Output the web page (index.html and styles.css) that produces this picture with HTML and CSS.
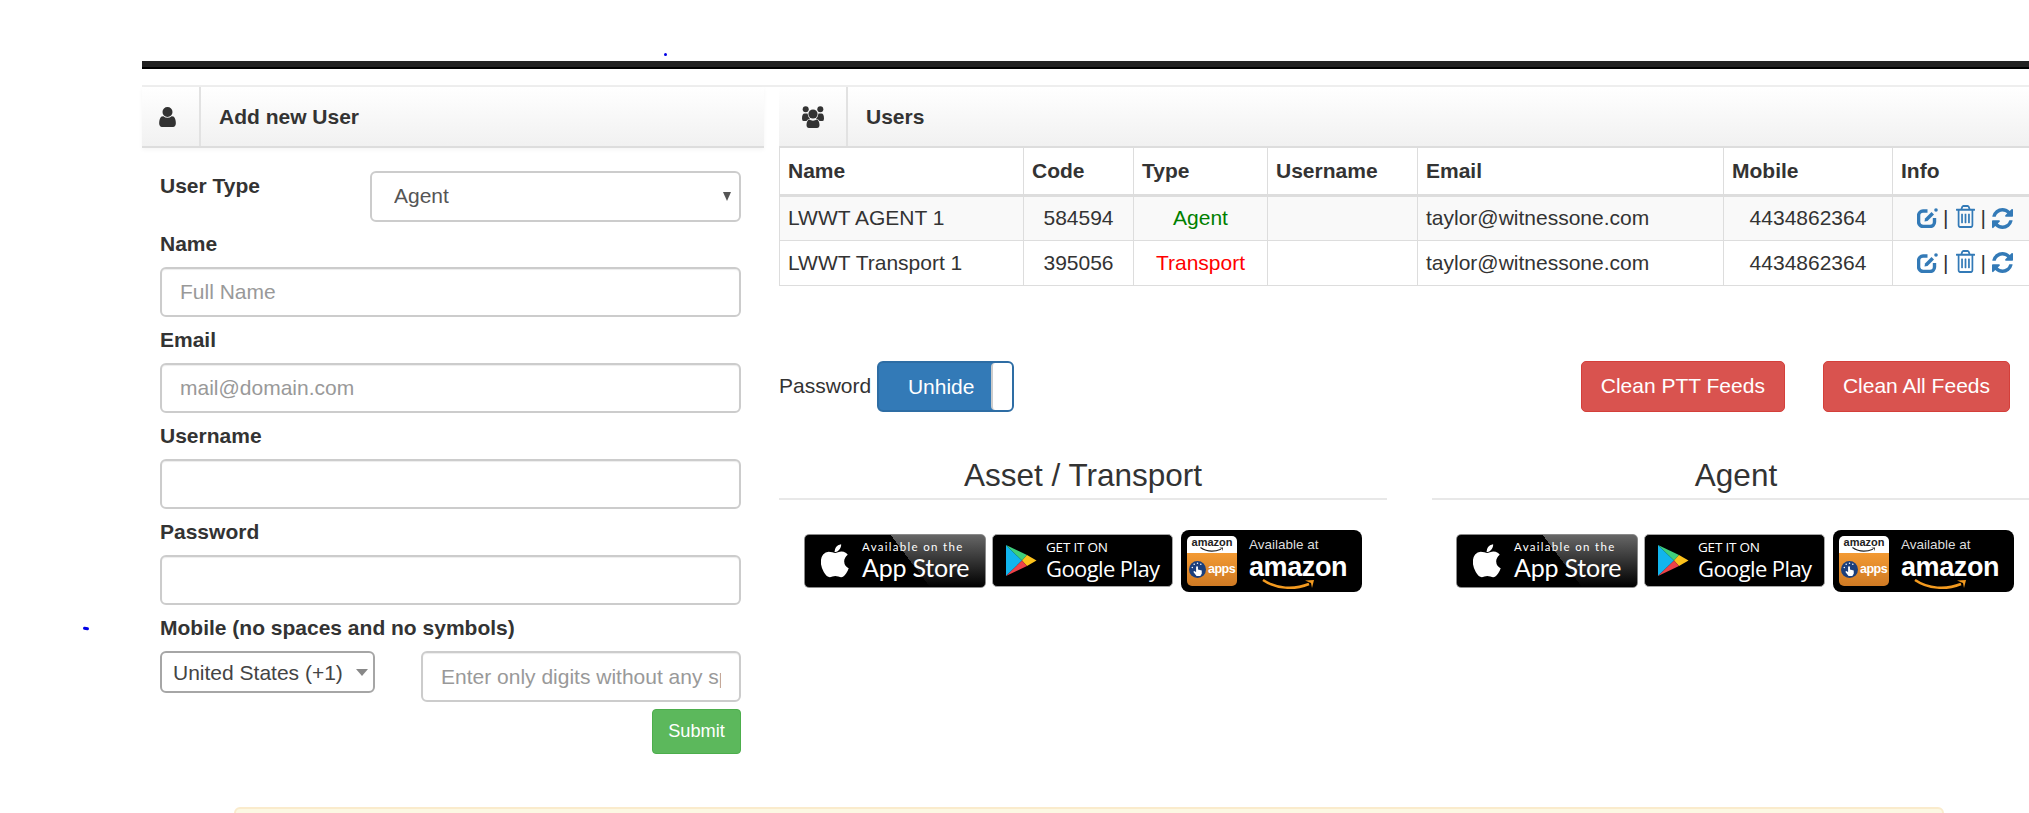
FILE: index.html
```html
<!DOCTYPE html>
<html>
<head>
  <title>Users</title>
  <link rel="stylesheet" href="styles.css">
</head>
<body>
  <svg class="defs" width="0" height="0">
    <symbol id="i-edit" viewBox="0 0 21 20">
      <path d="M10.500 3H6A4.500 4.500 0 0 0 1.600 7.500v7A4.500 4.500 0 0 0 6 18.500h7a4.500 4.500 0 0 0 4.500-4.500V10" fill="none" stroke="currentColor" stroke-width="3.400"/>
      <path d="M8 10.500 14.500 4 17 6.500 10.500 13 7.500 13.500Z" fill="currentColor"/>
      <circle cx="19" cy="2" r="1.800" fill="currentColor"/>
    </symbol>
    <symbol id="i-trash" viewBox="192 128 1408 1536" preserveAspectRatio="none">
      <path d="M704 736v576q0 14-9 23t-23 9h-64q-14 0-23-9t-9-23v-576q0-14 9-23t23-9h64q14 0 23 9t9 23zm256 0v576q0 14-9 23t-23 9h-64q-14 0-23-9t-9-23v-576q0-14 9-23t23-9h64q14 0 23 9t9 23zm256 0v576q0 14-9 23t-23 9h-64q-14 0-23-9t-9-23v-576q0-14 9-23t23-9h64q14 0 23 9t9 23zm128 724v-948h-896v948q0 22 7 40.5t14.5 27 10.5 8.5h832q3 0 10.5-8.5t14.5-27 7-40.5zm-672-1076h448l-48-117q-7-9-17-11h-317q-10 2-17 11zm928 32v64q0 14-9 23t-23 9h-96v948q0 83-47 143.5t-113 60.5h-832q-66 0-113-58.5t-47-141.5v-952h-96q-14 0-23-9t-9-23v-64q0-14 9-23t23-9h309l70-167q15-37 54-63t79-26h320q40 0 79 26t54 63l70 167h309q14 0 23 9t9 23z" fill="currentColor"/>
    </symbol>
    <symbol id="i-sync" viewBox="128 128 1536 1536">
      <path d="M1639 1056q0 5-1 7-64 268-268 434.5t-478 166.5q-146 0-282.500-55t-243.500-157l-129 129q-19 19-45 19t-45-19-19-45v-448q0-26 19-45t45-19h448q26 0 45 19t19 45-19 45l-137 137q71 66 161 102t187 36q134 0 250-65t186-179q11-17 53-117 8-23 30-23h192q13 0 22.500 9.500t9.500 22.500zm25-800v448q0 26-19 45t-45 19h-448q-26 0-45-19t-19-45 19-45l138-138q-148-137-349-137-134 0-250 65t-186 179q-11 17-53 117-8 23-30 23h-199q-13 0-22.500-9.500t-9.500-22.500v-7q65-268 270-434.500t480-166.500q146 0 284 55.500t245 156.500l130-129q19-19 45-19t45 19 19 45z" fill="currentColor"/>
    </symbol>
    <symbol id="i-apple" viewBox="200 30 1400 1640">
      <path d="M1585 1215q-39 125-123 250-129 196-257 196-49 0-140-32-86-32-151-32-61 0-142 33-81 34-132 34-152 0-301-259-147-261-147-503 0-228 113-374 113-144 284-144 72 0 177 30 104 30 138 30 45 0 143-34 102-34 173-34 119 0 213 65 52 36 104 100-79 67-114 118-65 94-65 207 0 124 69 223t158 126zm-376-1173q0 61-29 136-30 75-93 138-54 54-108 72-37 11-104 17 3-149 78-257 74-107 250-132 1 3 2.500 11t2.500 11q0 2 .5 5t.5 6z" fill="currentColor"/>
    </symbol>
    <symbol id="i-play" viewBox="0 0 32 33">
      <path d="M1 1 17 16.500 1 32Z" fill="#12b5ee"/>
      <path d="M1 1 22 11 17 16.500Z" fill="#3ecf7c"/>
      <path d="M22 11 31.500 16.500 22 22 17 16.500Z" fill="#fcc21b"/>
      <path d="M1 32 17 16.500 22 22Z" fill="#ee4249"/>
    </symbol>
    <symbol id="i-smile" viewBox="0 0 54 11">
      <path d="M1 1C14 10 32 11 47 5" fill="none" stroke="currentColor" stroke-width="2.500"/>
      <path d="M43 1.500 52 1 50 9 49 4Z" fill="currentColor"/>
    </symbol>
    <symbol id="i-hand" viewBox="0 0 18 18">
      <circle cx="9" cy="9" r="9" fill="#1c3f7c"/>
      <path d="M7.500 6.500a1 1 0 0 1 2 0V9l4 1v3.500L12 16H8L4.500 11.500 6 10.500l1.500 1.500Z" fill="#fff"/>
      <circle cx="3.500" cy="7" r=".8" fill="#fff"/>
      <circle cx="5.500" cy="3.500" r=".8" fill="#fff"/>
      <circle cx="9" cy="2.500" r=".8" fill="#fff"/>
      <circle cx="12.500" cy="3.500" r=".8" fill="#fff"/>
    </symbol>
  </svg>

  <span class="speck speck-top"></span>
  <span class="speck speck-left"></span>

  <div class="page">
    <div class="topbar"></div>

    <div class="cols">
      <section class="left">
        <div class="panel-head">
          <span class="panel-icon user-icon">
            <svg class="icon-user" viewBox="256 128 1280 1536"><path d="M1536 1399q0 109-62.500 187t-150.500 78h-854q-88 0-150.500-78t-62.500-187q0-85 8.500-160.500t31.500-152 58.500-131 94-89 134.500-34.500q131 128 313 128t313-128q76 0 134.500 34.500t94 89 58.500 131 31.500 152 8.500 160.500zm-256-887q0 159-112.500 271.500t-271.500 112.500-271.500-112.500-112.500-271.500 112.500-271.500 271.500-112.500 271.500 112.500 112.500 271.500z" fill="currentColor"/></svg>
          </span>
          <h2 class="panel-title">Add new User</h2>
        </div>

        <form class="user-form">
          <div class="type-row">
            <label for="user-type" class="form-label">User Type</label>
            <div class="select-box">
              <select id="user-type" class="form-select">
                <option>Agent</option>
                <option>Transport</option>
              </select>
            </div>
          </div>

          <label for="full-name" class="form-label field-label">Name</label>
          <input id="full-name" class="form-input" type="text" placeholder="Full Name">

          <label for="email" class="form-label field-label">Email</label>
          <input id="email" class="form-input" type="text" placeholder="mail@domain.com">

          <label for="username" class="form-label field-label">Username</label>
          <input id="username" class="form-input" type="text">

          <label for="password" class="form-label field-label">Password</label>
          <input id="password" class="form-input" type="password">

          <label for="mobile" class="form-label field-label">Mobile (no spaces and no symbols)</label>
          <div class="mobile-row">
            <div class="country-box">
              <select class="country-select">
                <option>United States (+1)</option>
              </select>
            </div>
            <input id="mobile" class="form-input mobile-input" type="text" placeholder="Enter only digits without any spaces">
          </div>

          <div class="submit-row">
            <button type="submit" class="btn-submit">Submit</button>
          </div>
        </form>
      </section>

      <section class="right">
        <div class="panel-head">
          <span class="panel-icon users-icon">
            <svg class="icon-users" viewBox="0 0 22 22">
              <circle cx="3.700" cy="3.300" r="3"/>
              <circle cx="18.300" cy="3.300" r="3"/>
              <path d="M0 12.500C0 9 1 7.500 2.500 7.500H5.500Q6 11 8 12.500 5 13.500 4.500 15H1.500Q0 15 0 12.500Z"/>
              <path d="M22 12.500C22 9 21 7.500 19.500 7.500H16.500Q16 11 14 12.500 17 13.500 17.500 15H20.500Q22 15 22 12.500Z"/>
              <circle cx="11" cy="8" r="4.600"/>
              <path d="M4.500 19C4.500 15.500 6 13.500 7.500 13.500 9 15 13 15 14.500 13.500 16 13.500 17.500 15.500 17.500 19 17.500 21 16.500 22 15 22H7C5.500 22 4.500 21 4.500 19Z"/>
            </svg>
          </span>
          <h2 class="panel-title">Users</h2>
        </div>

        <table class="users-table">
          <thead>
            <tr>
              <th class="col-name">Name</th>
              <th class="col-code">Code</th>
              <th class="col-type">Type</th>
              <th class="col-user">Username</th>
              <th class="col-email">Email</th>
              <th class="col-mobile">Mobile</th>
              <th class="col-info">Info</th>
            </tr>
          </thead>
          <tbody>
            <tr class="row-odd">
              <td>LWWT AGENT 1</td>
              <td class="center">584594</td>
              <td class="center type-agent">Agent</td>
              <td></td>
              <td>taylor@witnessone.com</td>
              <td class="center">4434862364</td>
              <td>
                <div class="actions">
                  <svg class="act act-edit"><use href="#i-edit"/></svg><span class="pipe">|</span>
                  <svg class="act act-trash"><use href="#i-trash"/></svg><span class="pipe">|</span>
                  <svg class="act act-sync"><use href="#i-sync"/></svg>
                </div>
              </td>
            </tr>
            <tr>
              <td>LWWT Transport 1</td>
              <td class="center">395056</td>
              <td class="center type-transport">Transport</td>
              <td></td>
              <td>taylor@witnessone.com</td>
              <td class="center">4434862364</td>
              <td>
                <div class="actions">
                  <svg class="act act-edit"><use href="#i-edit"/></svg><span class="pipe">|</span>
                  <svg class="act act-trash"><use href="#i-trash"/></svg><span class="pipe">|</span>
                  <svg class="act act-sync"><use href="#i-sync"/></svg>
                </div>
              </td>
            </tr>
          </tbody>
        </table>

        <div class="tools-row">
          <div class="password-toggle">
            <span>Password</span>
            <div class="toggle">
              <span class="toggle-on">Unhide</span>
              <span class="toggle-handle"></span>
            </div>
          </div>
          <div class="clean-btns">
            <button class="btn-danger">Clean PTT Feeds</button>
            <button class="btn-danger">Clean All Feeds</button>
          </div>
        </div>

        <div class="downloads">
          <div class="dl">
            <h3 class="dl-title">Asset / Transport</h3>
            <div class="badges">
              <div class="badge badge-apple">
                <svg class="badge-logo-apple"><use href="#i-apple"/></svg>
                <div class="badge-text">
                  <span class="apple-small">Available on the</span>
                  <span class="apple-big">App Store</span>
                </div>
              </div>
              <div class="badge badge-google">
                <svg class="badge-logo-play"><use href="#i-play"/></svg>
                <div class="badge-text">
                  <span class="google-small">GET IT ON</span>
                  <span class="google-big">Google Play</span>
                </div>
              </div>
              <div class="badge badge-amazon">
                <div class="amz-tile">
                  <div class="amz-tile-top">
                    <span>amazon</span>
                    <svg class="amz-tile-smile"><use href="#i-smile"/></svg>
                  </div>
                  <div class="amz-tile-bottom">
                    <svg class="amz-hand"><use href="#i-hand"/></svg>
                    <span>apps</span>
                  </div>
                </div>
                <div class="badge-text">
                  <span class="amz-small">Available at</span>
                  <span class="amz-big">amazon</span>
                  <svg class="amz-smile"><use href="#i-smile"/></svg>
                </div>
              </div>
            </div>
          </div>

          <div class="dl">
            <h3 class="dl-title">Agent</h3>
            <div class="badges">
              <div class="badge badge-apple">
                <svg class="badge-logo-apple"><use href="#i-apple"/></svg>
                <div class="badge-text">
                  <span class="apple-small">Available on the</span>
                  <span class="apple-big">App Store</span>
                </div>
              </div>
              <div class="badge badge-google">
                <svg class="badge-logo-play"><use href="#i-play"/></svg>
                <div class="badge-text">
                  <span class="google-small">GET IT ON</span>
                  <span class="google-big">Google Play</span>
                </div>
              </div>
              <div class="badge badge-amazon">
                <div class="amz-tile">
                  <div class="amz-tile-top">
                    <span>amazon</span>
                    <svg class="amz-tile-smile"><use href="#i-smile"/></svg>
                  </div>
                  <div class="amz-tile-bottom">
                    <svg class="amz-hand"><use href="#i-hand"/></svg>
                    <span>apps</span>
                  </div>
                </div>
                <div class="badge-text">
                  <span class="amz-small">Available at</span>
                  <span class="amz-big">amazon</span>
                  <svg class="amz-smile"><use href="#i-smile"/></svg>
                </div>
              </div>
            </div>
          </div>
        </div>
      </section>
    </div>

    <div class="notice"></div>
  </div>
</body>
</html>
```

FILE: styles.css
```css
html, body {
  margin: 0;
  height: 813px;
  overflow: hidden;
  background: #fff;
}

body {
  position: relative;
  font-family: "Liberation Sans", Arial, sans-serif;
  font-size: 21px;
  color: #333;
}

.defs {
  position: absolute;
}

.speck {
  position: absolute;
  background: #0000e6;
}

.speck-top {
  left: 664px;
  top: 53px;
  width: 3px;
  height: 3px;
  border-radius: 50%;
}

.speck-left {
  left: 83px;
  top: 627px;
  width: 6px;
  height: 3px;
  border-radius: 2px;
  transform: rotate(12deg);
}

.page {
  width: 1887px;
  margin-left: 142px;
  padding-top: 61px;
}

.topbar {
  height: 6px;
  background: #222;
  border-bottom: 2px solid #000;
}

.cols {
  display: flex;
  margin-top: 16px;
  border-top: 2px solid #eee;
}

.left {
  flex: none;
  width: 622px;
}

.right {
  flex: none;
  width: 1261px;
  margin-left: 15px;
}

/* panel heads */
.panel-head {
  display: flex;
  align-items: stretch;
  height: 59px;
  background: linear-gradient(#fff, #f1f1f1);
  border-bottom: 2px solid #ddd;
}

.left .panel-head {
  box-shadow: 0 2px 4px rgba(0, 0, 0, 0.04);
}

.panel-icon {
  display: flex;
  align-items: center;
  justify-content: center;
  flex: none;
  width: 57px;
  border-right: 2px solid #e2e2e2;
}

.user-icon {
  box-sizing: border-box;
  width: 59px;
  padding-right: 6px;
}

.users-icon {
  width: 67px;
}

.icon-user {
  width: 17px;
  height: 20px;
}

.icon-users {
  width: 22px;
  height: 22px;
  fill: #333;
}

.panel-title {
  margin: 0;
  padding-left: 18px;
  font-size: 21px;
  line-height: 59px;
  font-weight: bold;
}

/* form */
.user-form {
  padding: 23px 23px 0 18px;
}

.type-row {
  display: grid;
  grid-template-columns: 210px 371px;
}

.form-label {
  display: block;
  font-weight: bold;
  line-height: 26px;
}

.type-row .form-label {
  line-height: 30px;
}

.field-label {
  margin-top: 10px;
  margin-bottom: 10px;
}

.type-row + .field-label {
  margin-top: 9px;
}

.select-box,
.country-box {
  position: relative;
}

.select-box::after {
  content: "";
  position: absolute;
  right: 10px;
  top: 21px;
  border-left: 4px solid transparent;
  border-right: 4px solid transparent;
  border-top: 9px solid #555;
}

.country-box::after {
  content: "";
  position: absolute;
  right: 7px;
  top: 18px;
  border-left: 6px solid transparent;
  border-right: 6px solid transparent;
  border-top: 7px solid #888;
}

.form-select {
  appearance: none;
  box-sizing: border-box;
  display: block;
  width: 100%;
  height: 51px;
  padding: 0 23px 2px 22px;
  border: 2px solid #ccc;
  border-radius: 6px;
  background: #fff;
  font: inherit;
  color: #555;
}

.form-input {
  box-sizing: border-box;
  display: block;
  width: 100%;
  height: 50px;
  padding: 0 18px;
  border: 2px solid #ccc;
  border-radius: 6px;
  background: #fff;
  font: inherit;
  color: #555;
  box-shadow: inset 0 1px 1px rgba(0, 0, 0, 0.075);
}

.form-input::placeholder {
  color: #999;
  opacity: 1;
}

.mobile-row {
  display: flex;
  justify-content: space-between;
  align-items: flex-start;
}

.country-box {
  width: 215px;
}

.country-select {
  appearance: none;
  box-sizing: border-box;
  display: block;
  width: 100%;
  height: 42px;
  padding: 0 11px;
  border: 2px solid #a6a6a6;
  border-radius: 6px;
  background: #fff;
  font: inherit;
  color: #444;
}

.mobile-input {
  width: 320px;
  height: 51px;
}

.submit-row {
  display: flex;
  justify-content: flex-end;
  margin-top: 7px;
}

.btn-submit {
  width: 89px;
  height: 45px;
  padding: 0;
  border: 1px solid #4cae4c;
  border-radius: 4px;
  background: #5cb85c;
  font-family: inherit;
  font-size: 18.2px;
  color: #fff;
}

/* users table */
.users-table {
  table-layout: fixed;
  width: 1261px;
  border-collapse: collapse;
  color: #333;
}

.users-table th,
.users-table td {
  box-sizing: border-box;
  padding: 0 8px;
  border: 1px solid #ddd;
  text-align: left;
}

.users-table th {
  height: 47px;
  border-top: 0;
  border-bottom: 3px solid #ddd;
  font-weight: bold;
}

.users-table td {
  height: 45px;
}

.users-table .center {
  text-align: center;
}

.col-name { width: 244px; }
.col-code { width: 110px; }
.col-type { width: 134px; }
.col-user { width: 150px; }
.col-email { width: 306px; }
.col-mobile { width: 169px; }
.col-info { width: 148px; }

.row-odd {
  background: #f9f9f9;
}

.users-table .type-agent {
  color: #008000;
}

.users-table .type-transport {
  color: #f00;
}

.actions {
  display: flex;
  align-items: center;
  padding-left: 16px;
}

.act {
  flex: none;
  color: #337ab7;
}

.pipe {
  margin: 0 6px 0 5px;
}

.act-edit {
  width: 21px;
  height: 20px;
}

.act-edit + .pipe {
  margin-right: 8px;
}

.act-trash {
  width: 19px;
  height: 23px;
  margin-top: -3px;
}

.act-sync {
  width: 21px;
  height: 21px;
}

/* password row + clean buttons */
.tools-row {
  display: flex;
  justify-content: space-between;
  align-items: flex-start;
  margin-top: 75px;
  padding-right: 30px;
}

.password-toggle {
  display: flex;
  align-items: center;
  gap: 6px;
}

.toggle {
  box-sizing: border-box;
  display: flex;
  width: 137px;
  height: 51px;
  border: 2px solid #2e6da4;
  border-radius: 6px;
  background: #337ab7;
  overflow: hidden;
}

.toggle-on {
  flex: 1;
  padding-left: 12px;
  line-height: 47px;
  text-align: center;
  color: #fff;
}

.toggle-handle {
  flex: none;
  box-sizing: border-box;
  width: 21px;
  border-left: 2px solid #ccc;
  border-radius: 4px 0 0 4px;
  background: #fff;
}

.clean-btns {
  display: flex;
  gap: 38px;
}

.btn-danger {
  height: 51px;
  padding: 0 19px;
  border: 1px solid #d43f3a;
  border-radius: 5px;
  background: #d9534f;
  font: inherit;
  color: #fff;
}

/* download badges */
.downloads {
  display: flex;
  gap: 45px;
  margin-top: 46px;
}

.dl {
  flex: none;
  width: 608px;
}

.dl-title {
  margin: 0;
  padding-bottom: 6px;
  border-bottom: 2px solid #e8e8e8;
  font-size: 31.5px;
  font-weight: normal;
  line-height: 34px;
  text-align: center;
}

.badges {
  display: flex;
  align-items: center;
  gap: 6px;
  margin-top: 30px;
  padding-left: 25px;
}

.dl + .dl .badges {
  padding-left: 24px;
}

.badge {
  box-sizing: border-box;
  display: flex;
  align-items: center;
  flex: none;
  background: #000;
  color: #fff;
}

.badge-text {
  display: flex;
  flex-direction: column;
}

.badge-apple {
  width: 182px;
  height: 54px;
  padding-left: 16px;
  border: 1px solid #8a8a8a;
  border-radius: 5px;
  background: linear-gradient(53deg, #000 57%, transparent 57%), linear-gradient(#666, #000);
  font-family: Lato, "Open Sans", sans-serif;
}

.badge-logo-apple {
  flex: none;
  width: 28px;
  height: 34px;
  margin-right: 13px;
}

.apple-small {
  font-size: 11.5px;
  line-height: 14px;
  letter-spacing: 1.3px;
}

.apple-big {
  font-size: 25px;
  line-height: 27px;
  letter-spacing: -0.2px;
}

.badge-google {
  width: 181px;
  height: 53px;
  padding-left: 12px;
  border: 1px solid #a6a6a6;
  border-radius: 5px;
  font-family: "Open Sans", sans-serif;
}

.badge-logo-play {
  flex: none;
  width: 32px;
  height: 33px;
  margin-right: 9px;
}

.google-small {
  font-size: 13.5px;
  line-height: 14px;
  letter-spacing: -0.2px;
}

.google-big {
  font-size: 22px;
  line-height: 28px;
  letter-spacing: -0.6px;
}

.badge-amazon {
  width: 181px;
  height: 62px;
  margin-left: 2px;
  padding-left: 6px;
  border-radius: 8px;
}

.amz-tile {
  flex: none;
  display: flex;
  flex-direction: column;
  width: 50px;
  height: 50px;
  margin-right: 12px;
  border-radius: 5px;
  overflow: hidden;
}

.amz-tile-top {
  position: relative;
  height: 17px;
  background: #fff;
  color: #222;
  font-size: 11px;
  font-weight: bold;
  line-height: 12px;
  text-align: center;
}

.amz-tile-smile {
  position: absolute;
  left: 13px;
  top: 11px;
  width: 24px;
  height: 5px;
}

.amz-tile-bottom {
  flex: 1;
  display: flex;
  align-items: center;
  gap: 2px;
  padding-left: 2px;
  background: linear-gradient(#f39a33, #cf7a24);
  font-size: 12.5px;
  font-weight: bold;
  letter-spacing: -0.5px;
}

.amz-hand {
  flex: none;
  width: 17px;
  height: 17px;
}

.amz-small {
  font-size: 13.5px;
  line-height: 16px;
  color: #ddd;
}

.amz-big {
  font-size: 27px;
  font-weight: bold;
  line-height: 28px;
  letter-spacing: -0.4px;
}

.amz-smile {
  width: 54px;
  height: 11px;
  margin: -2px 0 -6px 13px;
  color: #f39a1f;
}

/* alert box cut off at the bottom */
.notice {
  box-sizing: border-box;
  width: 1710px;
  height: 40px;
  margin-top: 53px;
  margin-left: 92px;
  border: 2px solid #faebcc;
  border-radius: 6px;
  background: #fcf8e3;
}
```
